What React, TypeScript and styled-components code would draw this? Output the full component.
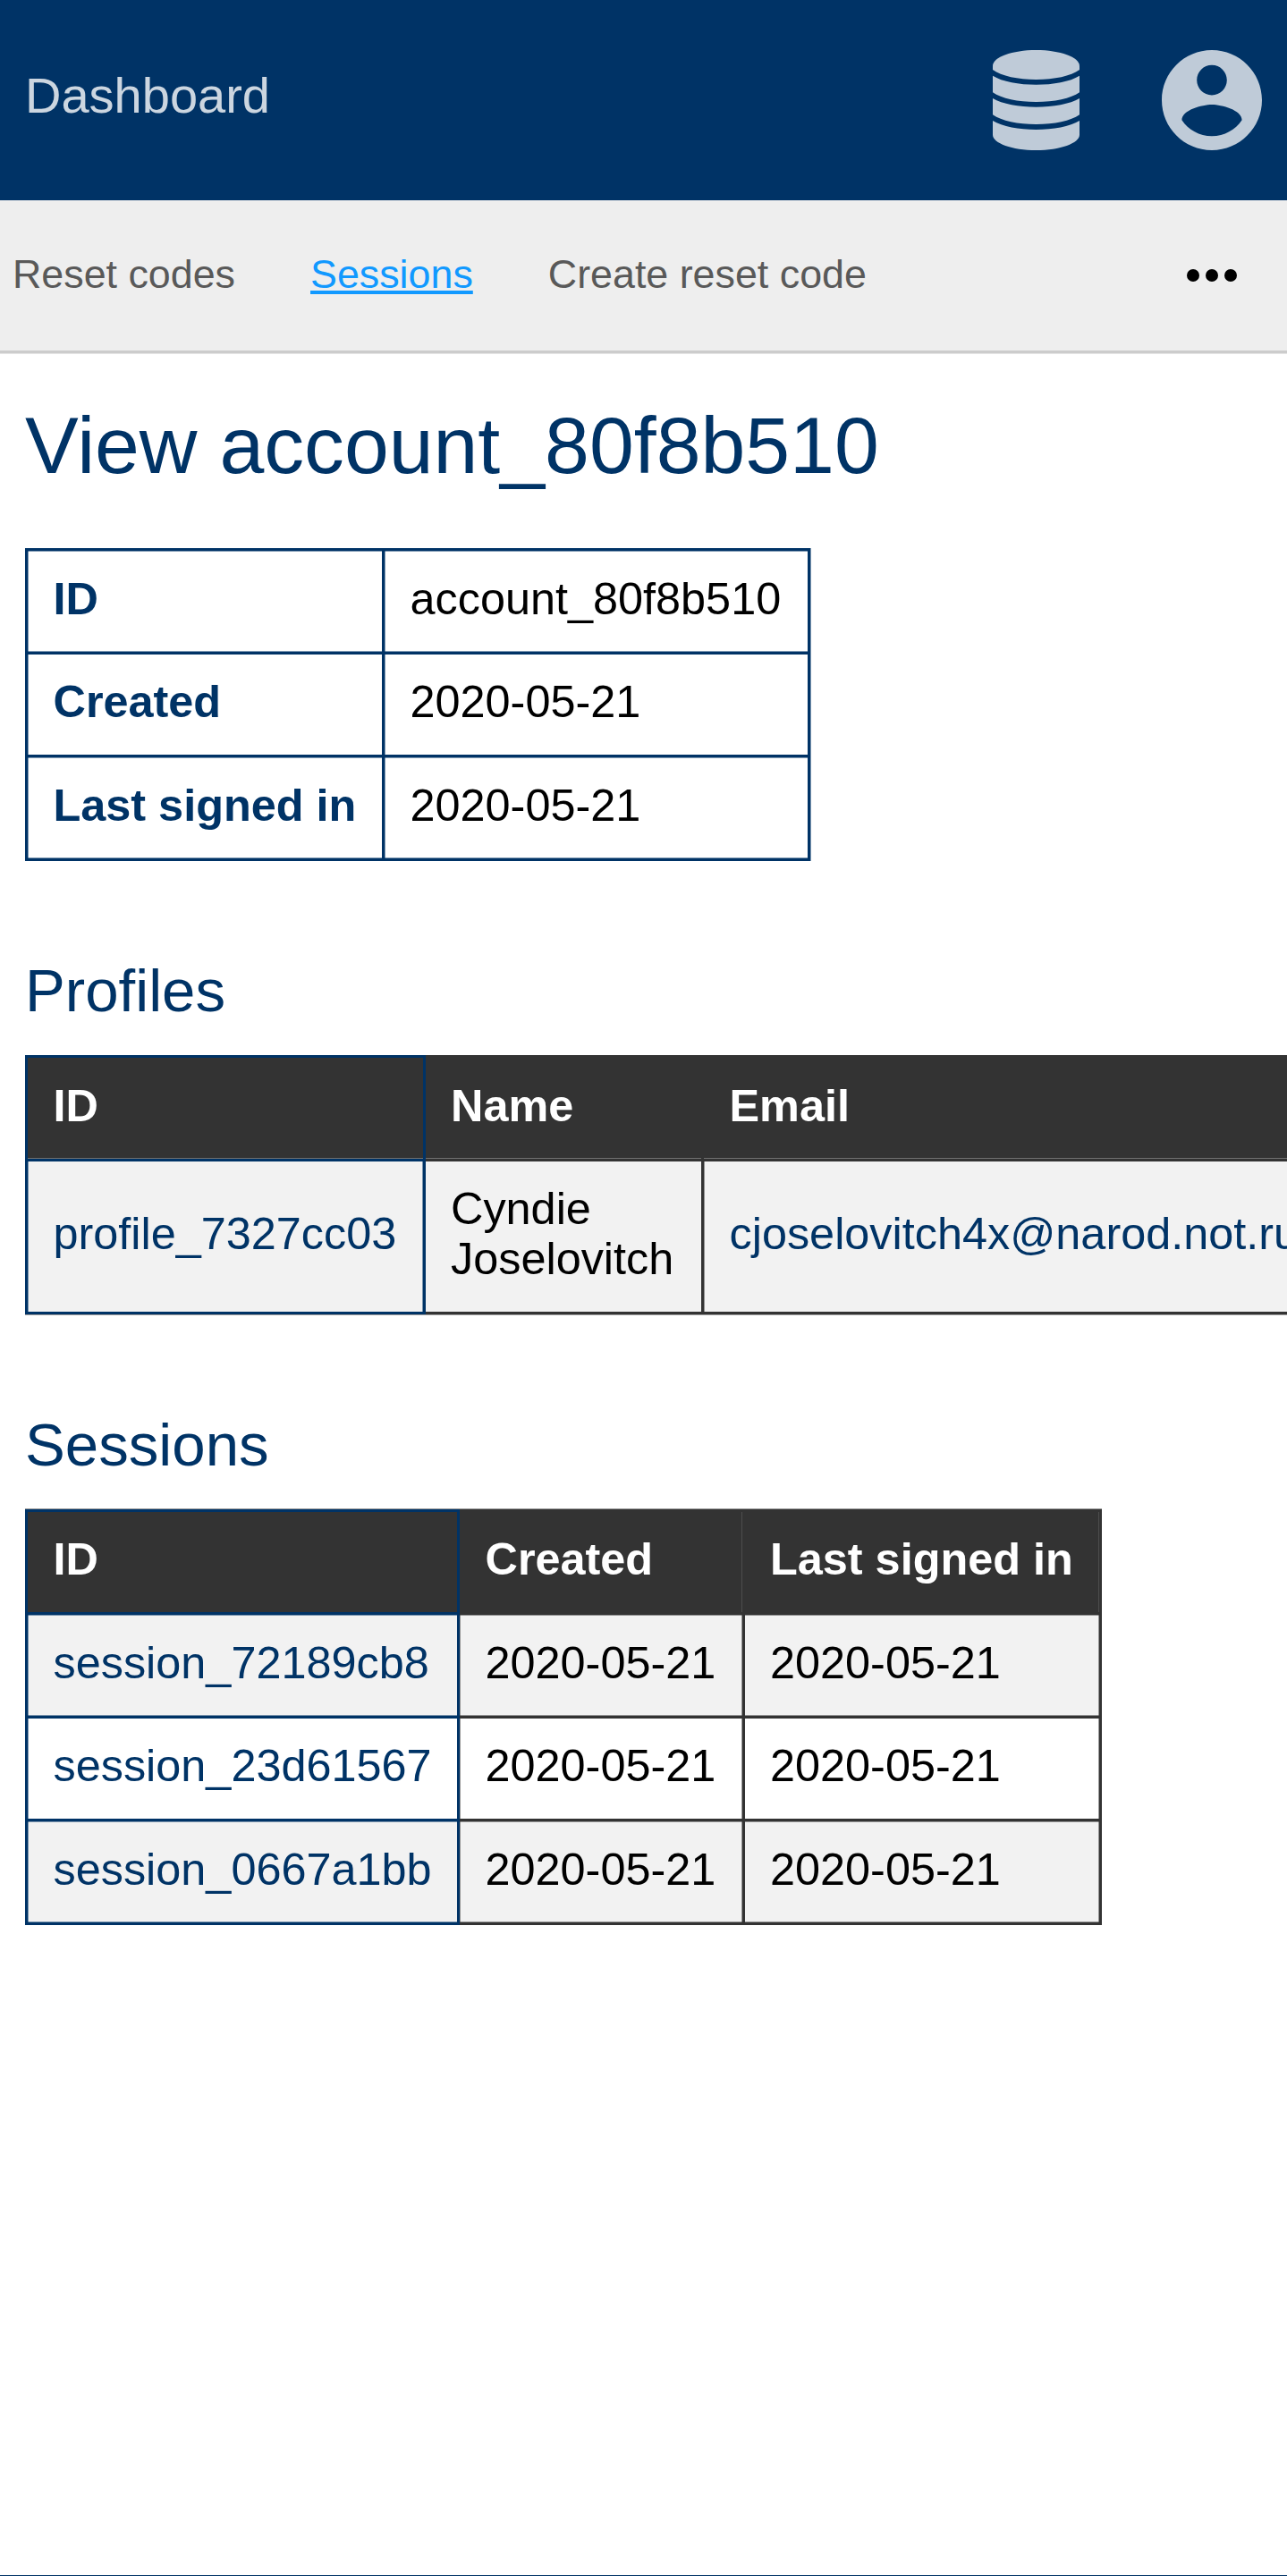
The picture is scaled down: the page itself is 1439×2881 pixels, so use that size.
import React from "react";
import styled, { createGlobalStyle } from "styled-components";

const navy = "#003366";
const charcoal = "#333333";

const GlobalStyle = createGlobalStyle`
  *, *::before, *::after { box-sizing: border-box; }
  body {
    margin: 0;
    background: #fff;
    color: #000;
    font-family: "Liberation Sans", Arial, Helvetica, sans-serif;
  }
`;

const Page = styled.div`
  display: flex;
  flex-direction: column;
  height: 2881px;
  overflow: hidden;
`;

const Header = styled.header`
  display: flex;
  align-items: center;
  justify-content: space-between;
  flex: none;
  height: 224px;
  padding: 0 28.5px 0 28px;
  background: ${navy};
`;

const Brand = styled.a`
  padding-bottom: 11px;
  font-size: 56px;
  line-height: 63px;
  color: rgba(255, 255, 255, 0.8);
`;

const HeaderMenus = styled.div`
  display: flex;
  align-items: center;
  gap: 91.5px;
  color: rgba(255, 255, 255, 0.75);
`;

const Icon = styled.svg<{ $w: number; $h: number }>`
  display: block;
  flex: none;
  width: ${(p) => p.$w}px;
  height: ${(p) => p.$h}px;
  fill: currentColor;
`;

const SubNav = styled.nav`
  display: flex;
  align-items: center;
  gap: 84px;
  flex: none;
  height: 171px;
  padding: 0 42.5px 0 14px;
  background: #eee;
  border-bottom: 3px solid #ccc;
  box-shadow: 0 1px 0 #e5e5e5;
`;

const NavLink = styled.a<{ $active?: boolean }>`
  padding-bottom: 3px;
  font-size: 44.8px;
  line-height: 51px;
  white-space: nowrap;
  color: ${(p) => (p.$active ? "#1199ff" : "#595959")};
  text-decoration: ${(p) => (p.$active ? "underline" : "none")};
  text-decoration-thickness: 4px;
  text-underline-offset: 3px;
  text-decoration-skip-ink: none;
`;

const MoreButton = styled.button`
  margin: 0 0 0 auto;
  padding: 0;
  border: 0;
  background: none;
  color: #000;
`;

const Main = styled.main`
  flex: 1;
  padding: 53px 0 0 28px;
`;

const Title = styled.h1`
  margin: 0 0 65px;
  font-size: 89.6px;
  font-weight: 400;
  line-height: 100px;
  color: ${navy};
`;

const Section = styled.section<{ $gap: number }>`
  margin-top: ${(p) => p.$gap}px;
`;

const SectionTitle = styled.h2`
  margin: 0 0 35px;
  font-size: 67.2px;
  font-weight: 400;
  line-height: 75px;
  color: ${navy};
`;

const Table = styled.table<{ $width: number; $halo: string }>`
  width: ${(p) => p.$width}px;
  table-layout: fixed;
  border-collapse: collapse;
  box-shadow: ${(p) => p.$halo};
  font-size: 50.4px;
  line-height: 56px;
  text-align: left;
`;

const Col = styled.col<{ $width: number }>`
  width: ${(p) => p.$width}px;
`;

const softEdges: Record<string, string> = {
  t: "inset 0 1px 0",
  b: "inset 0 -1px 0",
  l: "inset 1px 0 0",
  r: "inset -1px 0 0",
};

const edgeShadow = (sides: string, color: string) =>
  sides ? [...sides].map((s) => `${softEdges[s]} ${color}`).join(", ") : "none";

const Cell = styled.td<{ $edge?: string; $soft?: string; $tight?: boolean; $indent?: number }>`
  padding: ${(p) => (p.$tight ? 25 : 26)}px 0 31px ${(p) => p.$indent ?? 28.5}px;
  border: 3px solid ${(p) => p.$edge ?? charcoal};
  box-shadow: ${(p) => edgeShadow(p.$soft ?? "", (p.$edge ?? charcoal) + "80")};
  vertical-align: middle;
`;

const FieldName = styled(Cell)`
  font-weight: 700;
  color: ${navy};
`;

const HeadCell = styled(Cell)`
  background: ${charcoal};
  box-shadow: ${(p) => edgeShadow(p.$soft ?? "", p.$soft === "b" ? "#707070" : "#4d4d4d")};
  color: #fff;
  font-weight: 700;
`;

const BodyRow = styled.tr`
  &:nth-child(odd) {
    background: #f2f2f2;
  }
`;

const Link = styled.a`
  color: ${navy};
`;

const Footer = styled.footer`
  flex: none;
  height: 1px;
  background: ${navy};
`;

const DatabaseIcon = () => (
  <Icon $w={97} $h={112} viewBox="0 0 291 336">
    <path d="M0 53C0 24 65 0 145.500 0S291 24 291 53V66C262 87 206 99 145.500 99S29 87 0 66Z" />
    <path d="M0 86C32 106 88 116 145.500 116S259 106 291 86V142C262 163 206 174 145.500 174S29 163 0 142Z" />
    <path d="M0 162C32 181 88 191 145.500 191S259 181 291 162V217C262 238 206 249 145.500 249S29 238 0 217Z" />
    <path d="M0 237C32 257 88 267 145.500 267S259 257 291 237V284C291 312 226 336 145.500 336S0 312 0 284Z" />
  </Icon>
);

const AccountIcon = () => (
  <Icon $w={112} $h={112} viewBox="2 2 20 20">
    <path d="M12 2C6.480 2 2 6.480 2 12s4.480 10 10 10 10-4.480 10-10S17.520 2 12 2zm0 3c1.660 0 3 1.340 3 3s-1.340 3-3 3-3-1.340-3-3 1.340-3 3-3zm0 14.200c-2.500 0-4.710-1.280-6-3.220.030-1.990 4-3.080 6-3.080 1.990 0 5.970 1.090 6 3.080-1.290 1.940-3.500 3.220-6 3.220z" />
  </Icon>
);

const MoreIcon = () => (
  <Icon $w={84} $h={84} viewBox="0 0 24 24">
    <circle cx="6" cy="12" r="2" />
    <circle cx="12" cy="12" r="2" />
    <circle cx="18" cy="12" r="2" />
  </Icon>
);

const account = [
  ["ID", "account_80f8b510"],
  ["Created", "2020-05-21"],
  ["Last signed in", "2020-05-21"],
];

const sessions = [
  { id: "session_72189cb8", created: "2020-05-21", seen: "2020-05-21" },
  { id: "session_23d61567", created: "2020-05-21", seen: "2020-05-21" },
  { id: "session_0667a1bb", created: "2020-05-21", seen: "2020-05-21" },
];

export default function App() {
  return (
    <>
      <GlobalStyle />
      <Page>
        <Header>
          <Brand>Dashboard</Brand>
          <HeaderMenus>
            <DatabaseIcon />
            <AccountIcon />
          </HeaderMenus>
        </Header>
        <SubNav>
          <NavLink>Reset codes</NavLink>
          <NavLink $active>Sessions</NavLink>
          <NavLink>Create reset code</NavLink>
          <MoreButton aria-label="More">
            <MoreIcon />
          </MoreButton>
        </SubNav>
        <Main>
          <Title>View account_80f8b510</Title>
          <Table $width={878} $halo={`1px 0 0 ${navy}80`}>
            <colgroup>
              <Col $width={399} />
              <Col $width={476} />
            </colgroup>
            <tbody>
              {account.map(([name, value], i) => {
                const tight = i % 2 === 1;
                const soft = tight ? "l" : "ltb";
                return (
                  <tr key={name}>
                    <FieldName as="th" $edge={navy} $soft={soft} $tight={tight}>
                      {name}
                    </FieldName>
                    <Cell $edge={navy} $soft={soft} $tight={tight}>
                      {value}
                    </Cell>
                  </tr>
                );
              })}
            </tbody>
          </Table>

          <Section $gap={107}>
            <SectionTitle>Profiles</SectionTitle>
            <Table $width={1500} $halo={`0 1px 0 ${charcoal}80`}>
              <colgroup>
                <Col $width={445} />
                <Col $width={311} />
                <Col $width={741} />
              </colgroup>
              <thead>
                <tr>
                  <HeadCell as="th" $edge={navy} $soft="b">ID</HeadCell>
                  <HeadCell as="th" $soft="b" $indent={28}>Name</HeadCell>
                  <HeadCell as="th" $soft="b">Email</HeadCell>
                </tr>
              </thead>
              <tbody>
                <BodyRow>
                  <Cell $edge={navy} $soft="lr" $tight><Link>profile_7327cc03</Link></Cell>
                  <Cell $tight $indent={28}>Cyndie Joselovitch</Cell>
                  <Cell $soft="l" $tight><Link>cjoselovitch4x@narod.not.ru</Link></Cell>
                </BodyRow>
              </tbody>
            </Table>
          </Section>

          <Section $gap={108}>
            <SectionTitle>Sessions</SectionTitle>
            <Table $width={1204} $halo={`0 -1px 0 ${charcoal}80`}>
              <colgroup>
                <Col $width={483} />
                <Col $width={319} />
                <Col $width={399} />
              </colgroup>
              <thead>
                <tr>
                  <HeadCell as="th" $edge={navy} $tight>ID</HeadCell>
                  <HeadCell as="th" $soft="r" $tight>Created</HeadCell>
                  <HeadCell as="th" $soft="r" $tight $indent={28}>Last signed in</HeadCell>
                </tr>
              </thead>
              <tbody>
                {sessions.map((s, i) => {
                  const tight = i % 2 === 1;
                  const rows = tight ? "" : "tb";
                  return (
                    <BodyRow key={s.id}>
                      <Cell $edge={navy} $soft={"l" + rows} $tight={tight}>
                        <Link>{s.id}</Link>
                      </Cell>
                      <Cell $soft={"lr" + rows} $tight={tight}>{s.created}</Cell>
                      <Cell $soft={"r" + rows} $tight={tight} $indent={28}>{s.seen}</Cell>
                    </BodyRow>
                  );
                })}
              </tbody>
            </Table>
          </Section>
        </Main>
        <Footer />
      </Page>
    </>
  );
}
